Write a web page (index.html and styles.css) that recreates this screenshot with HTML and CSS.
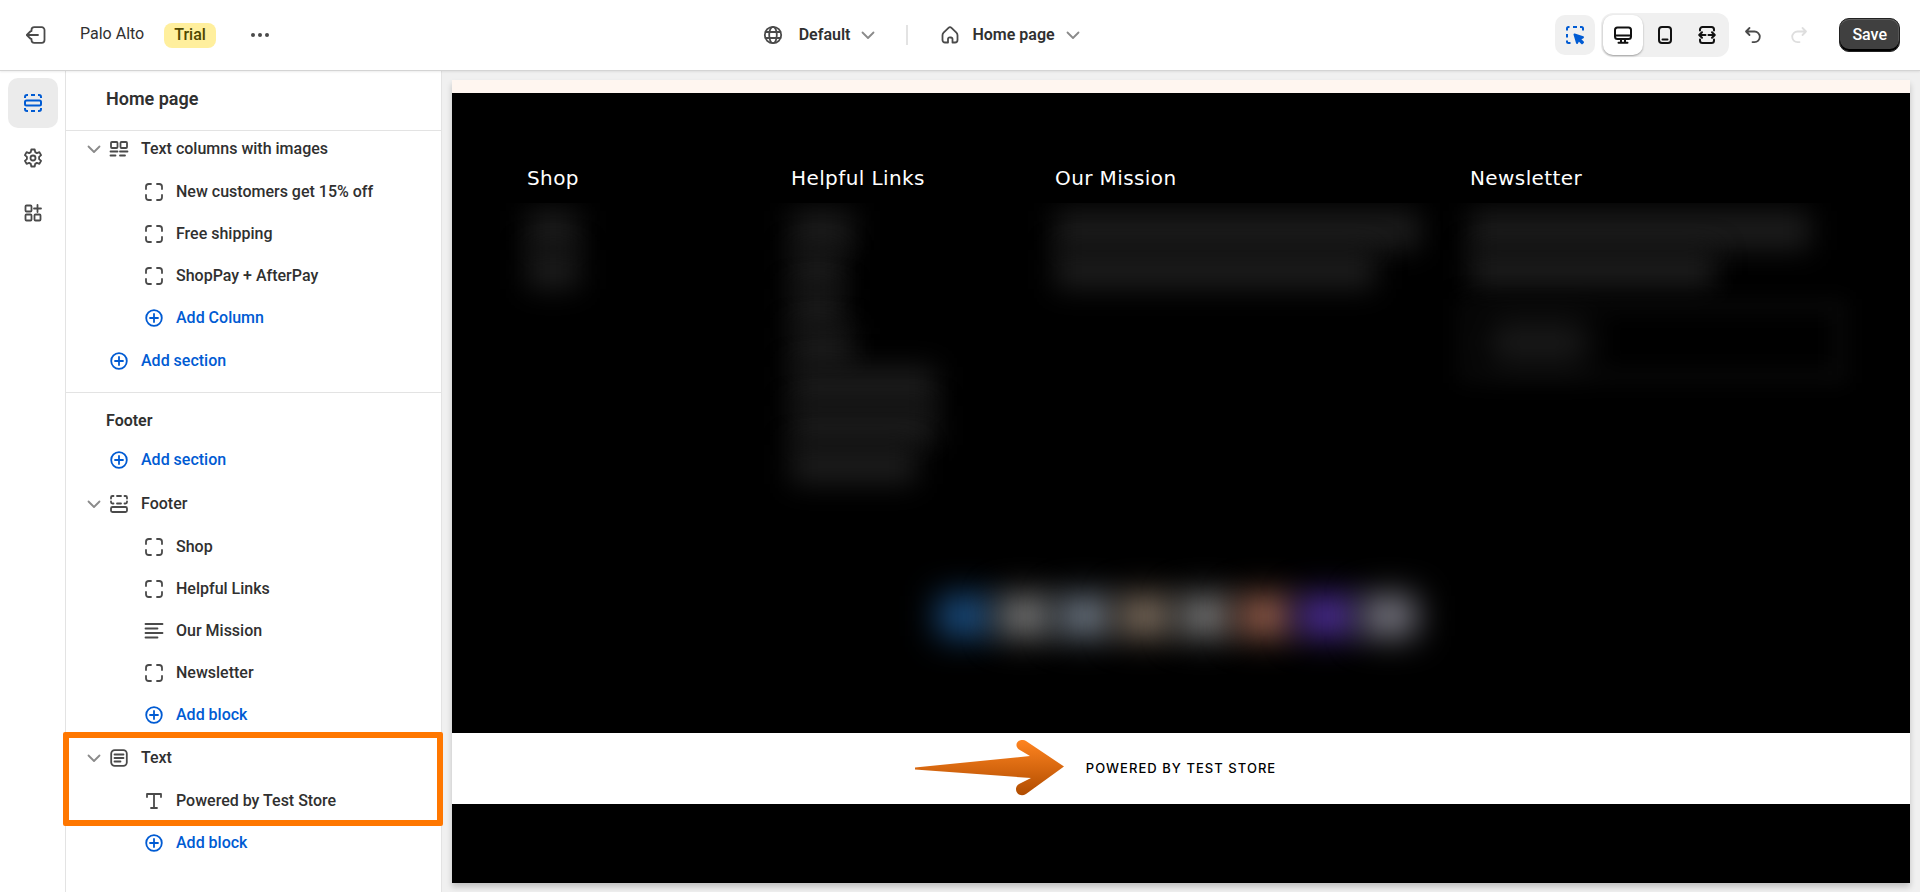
FILE: index.html
```
<!DOCTYPE html>
<html lang="en">
<head>
    <meta charset="utf-8">
    <title>Palo Alto | Theme editor</title>
    <link rel="stylesheet" href="styles.css">
</head>
<body>
    <!-- shared icons -->
    <svg class="sprite" aria-hidden="true">
        <symbol id="chevron" viewBox="0 0 20 20"><path d="M4.500 7.500 10 13l5.500-5.500"/></symbol>
        <symbol id="block" viewBox="0 0 20 20"><path d="M2 7V4.800A2.800 2.800 0 0 1 4.800 2H7M13 2h2.200A2.800 2.800 0 0 1 18 4.800V7M18 13v2.200a2.800 2.800 0 0 1-2.800 2.800H13M7 18H4.800A2.800 2.800 0 0 1 2 15.200V13"/></symbol>
        <symbol id="plus" viewBox="0 0 20 20"><circle cx="10" cy="10" r="7.800"/><path d="M10 6v8M6 10h8"/></symbol>
    </svg>

    <header class="topbar">
        <div class="topbar-left">
            <a class="exit" href="#" aria-label="Exit">
                <svg class="icon" viewBox="0 0 20 20"><path d="M5.500 6V5A2.800 2.800 0 0 1 8.300 2.200h7.400A2.800 2.800 0 0 1 18.500 5v10a2.800 2.800 0 0 1-2.800 2.800H8.300A2.800 2.800 0 0 1 5.500 15v-1M12 10H.8M4.300 6.500.8 10l3.500 3.500"/></svg>
            </a>
            <span class="theme-name">Palo Alto</span>
            <span class="badge">Trial</span>
            <button class="more" aria-label="More actions">
                <svg class="icon dots" viewBox="0 0 20 20"><circle cx="3" cy="10" r="2"/><circle cx="10" cy="10" r="2"/><circle cx="17" cy="10" r="2"/></svg>
            </button>
        </div>
        <div class="topbar-center">
            <button class="picker picker-market">
                <svg class="icon" viewBox="0 0 20 20"><circle cx="10" cy="10" r="8.200"/><ellipse cx="10" cy="10" rx="3.800" ry="8.200"/><path d="M2.500 7h15M2.500 13h15"/></svg>
                <span>Default</span>
                <svg class="icon chevron"><use href="#chevron"/></svg>
            </button>
            <span class="separator"></span>
            <button class="picker">
                <svg class="icon" viewBox="0 0 20 20"><path d="M2.500 10.200c0-1 .4-1.900 1.100-2.600l4.900-4.800a2.200 2.200 0 0 1 3 0l4.900 4.800c.7.700 1.100 1.600 1.100 2.600v4.800a2.500 2.500 0 0 1-2.500 2.500h-2.500V14a1.500 1.500 0 0 0-1.500-1.500h-1A1.500 1.500 0 0 0 8 14v3.500H5A2.500 2.500 0 0 1 2.500 15z"/></svg>
                <span>Home page</span>
                <svg class="icon chevron"><use href="#chevron"/></svg>
            </button>
        </div>
        <div class="topbar-right">
            <button class="tool inspector" aria-label="Preview inspector">
                <svg class="icon" viewBox="0 0 20 20"><path d="M2 5.500V3.500A1.500 1.500 0 0 1 3.500 2h1M8 2h4M15 2h1.500A1.500 1.500 0 0 1 18 3.500v2M2 9v3.500M2 15.500v1A1.500 1.500 0 0 0 3.500 18h2"/><path class="fill" d="m9.500 9.500 8.500 2.800-3.300 1.700 3.300 3.300-1 1-3.300-3.300-1.700 3z"/></svg>
            </button>
            <div class="devices">
                <button class="tool selected" aria-label="Desktop">
                    <svg class="icon" viewBox="0 0 20 20"><rect x="2" y="2.500" width="16" height="11.500" rx="2.500"/><path d="M2 10.500h16M8 14v3.500M12 14v3.500M5.500 17.800h9"/></svg>
                </button>
                <button class="tool" aria-label="Mobile">
                    <svg class="icon" viewBox="0 0 20 20"><rect x="4" y="2" width="12" height="16" rx="3"/><path d="M7.500 14.500h5"/></svg>
                </button>
                <button class="tool" aria-label="Fullscreen">
                    <svg class="icon" viewBox="0 0 20 20"><path d="M3 5.500v-1A2.500 2.500 0 0 1 5.500 2h9A2.500 2.500 0 0 1 17 4.500v1M3 14.500v1A2.500 2.500 0 0 0 5.500 18h9a2.500 2.500 0 0 0 2.500-2.500v-1M8.500 10H3M11.500 10H17M5 7.200 2.200 10 5 12.800M15 7.200l2.800 2.800-2.800 2.800"/></svg>
                </button>
            </div>
            <button class="tool undo" aria-label="Undo">
                <svg class="icon" viewBox="0 0 20 20"><path d="M6.500 3 3 6.500 6.500 10M3 6.500h8.500a5.300 5.300 0 0 1 0 10.600H9.500"/></svg>
            </button>
            <button class="tool redo" aria-label="Redo" disabled>
                <svg class="icon" viewBox="0 0 20 20"><path d="M13.500 3 17 6.500 13.500 10M17 6.500H8.500a5.300 5.300 0 0 0 0 10.600h2"/></svg>
            </button>
            <button class="save">Save</button>
        </div>
    </header>

    <div class="editor">
        <nav class="rail">
            <button class="rail-btn active" aria-label="Sections">
                <svg class="icon" viewBox="0 0 20 20"><rect x="2" y="7.500" width="16" height="5" rx="1.500"/><path d="M2 5V4a2 2 0 0 1 2-2h1M8 2h4M15 2h1a2 2 0 0 1 2 2v1M2 15v1a2 2 0 0 0 2 2h1M8 18h4M15 18h1a2 2 0 0 0 2-2v-1"/></svg>
            </button>
            <button class="rail-btn" aria-label="Theme settings">
                <svg class="icon" viewBox="0 0 20 20"><path d="M8.300 1.500h3.400l.5 2.600 1.700 1 2.500-.9 1.700 2.900-2 1.800v2.200l2 1.800-1.700 2.900-2.500-.9-1.700 1-.5 2.600H8.300l-.5-2.600-1.700-1-2.500.9-1.700-2.900 2-1.800V8.900l-2-1.800 1.700-2.900 2.500.9 1.700-1z"/><circle cx="10" cy="10" r="2.500"/></svg>
            </button>
            <button class="rail-btn" aria-label="App embeds">
                <svg class="icon" viewBox="0 0 20 20"><rect x="2.500" y="2.500" width="6" height="6" rx="1"/><rect x="2.500" y="11.500" width="6" height="6" rx="1"/><rect x="11.500" y="11.500" width="6" height="6" rx="1"/><path d="M14.500 2v7M11 5.500h7"/></svg>
            </button>
        </nav>

        <aside class="sidebar">
            <h2 class="sidebar-title">Home page</h2>
            <div class="tree">
                <button class="row section">
                    <svg class="icon chevron"><use href="#chevron"/></svg>
                    <svg class="icon" viewBox="0 0 20 20"><rect x="2" y="3" width="6.500" height="6" rx="1"/><rect x="11.500" y="3" width="6.500" height="6" rx="1"/><path d="M1.500 12.500h7M11 12.500h7.500M1.500 16.500h5M11 16.500h5"/></svg>
                    <span>Text columns with images</span>
                </button>
                <button class="row child"><svg class="icon"><use href="#block"/></svg><span>New customers get 15% off</span></button>
                <button class="row child"><svg class="icon"><use href="#block"/></svg><span>Free shipping</span></button>
                <button class="row child"><svg class="icon"><use href="#block"/></svg><span>ShopPay + AfterPay</span></button>
                <button class="row child add"><svg class="icon"><use href="#plus"/></svg><span>Add Column</span></button>
                <button class="row section leaf add"><svg class="icon"><use href="#plus"/></svg><span>Add section</span></button>
            </div>

            <h3 class="group-title">Footer</h3>
            <div class="group">
                <button class="row section leaf add"><svg class="icon"><use href="#plus"/></svg><span>Add section</span></button>
                <button class="row section">
                    <svg class="icon chevron"><use href="#chevron"/></svg>
                    <svg class="icon" viewBox="0 0 20 20"><rect x="2" y="13" width="16" height="5" rx="1.500"/><path d="M2 4.500V3.500A1.500 1.500 0 0 1 3.500 2h1M8 2h4M15.500 2h1A1.500 1.500 0 0 1 18 3.500v1M2 7.500v.5A1.500 1.500 0 0 0 3.500 9.500h1M8 9.500h4M15.500 9.500h1A1.500 1.500 0 0 0 18 8v-.5"/></svg>
                    <span>Footer</span>
                </button>
                <button class="row child"><svg class="icon"><use href="#block"/></svg><span>Shop</span></button>
                <button class="row child"><svg class="icon"><use href="#block"/></svg><span>Helpful Links</span></button>
                <button class="row child">
                    <svg class="icon" viewBox="0 0 20 20"><path d="M1.500 3h17M1.500 7.500h12M1.500 12h17M1.500 16.500h12"/></svg>
                    <span>Our Mission</span>
                </button>
                <button class="row child"><svg class="icon"><use href="#block"/></svg><span>Newsletter</span></button>
                <button class="row child add"><svg class="icon"><use href="#plus"/></svg><span>Add block</span></button>
                <div class="highlight">
                    <button class="row section">
                        <svg class="icon chevron"><use href="#chevron"/></svg>
                        <svg class="icon" viewBox="0 0 20 20"><rect x="2.200" y="2.200" width="15.600" height="15.600" rx="3.500"/><path d="M5.500 6.500h9M5.500 10h9M5.500 13.500h6"/></svg>
                        <span>Text</span>
                    </button>
                    <button class="row child">
                        <svg class="icon" viewBox="0 0 20 20"><path d="M3 6V3h14v3M10 3v14M7 17h6"/></svg>
                        <span>Powered by Test Store</span>
                    </button>
                </div>
                <button class="row child add"><svg class="icon"><use href="#plus"/></svg><span>Add block</span></button>
            </div>
        </aside>

        <main class="stage">
            <div class="preview">
                <div class="band"></div>
                <footer class="store-footer">
                    <div class="columns">
                        <section class="column">
                            <h4>Shop</h4>
                            <div class="blurred">
                                <i class="bar w50"></i><i class="bar w50"></i>
                            </div>
                        </section>
                        <section class="column">
                            <h4>Helpful Links</h4>
                            <div class="blurred">
                                <i class="bar w60"></i><i class="bar w50"></i><i class="bar w50"></i><i class="bar w60"></i>
                                <i class="bar w140"></i><i class="bar w140"></i><i class="bar w120"></i>
                            </div>
                        </section>
                        <section class="column">
                            <h4>Our Mission</h4>
                            <div class="blurred">
                                <i class="bar w360"></i><i class="bar w320"></i>
                            </div>
                        </section>
                        <section class="column">
                            <h4>Newsletter</h4>
                            <div class="blurred">
                                <i class="bar w340"></i><i class="bar w240"></i>
                                <div class="email"><i class="bar w100"></i></div>
                            </div>
                        </section>
                    </div>
                    <div class="payments">
                        <i class="pay blue"></i>
                        <i class="pay gray"></i>
                        <i class="pay steel"></i>
                        <i class="pay tan"></i>
                        <i class="pay gray"></i>
                        <i class="pay rust"></i>
                        <i class="pay purple"></i>
                        <i class="pay silver"></i>
                    </div>
                </footer>
                <div class="powered">
                    <p>
                        <svg class="arrow" viewBox="0 0 150 58" aria-hidden="true">
                            <defs>
                                <linearGradient id="orange" x1="0" y1="0" x2="0" y2="1">
                                    <stop offset="0" stop-color="#ff8420"/>
                                    <stop offset="1" stop-color="#b04c00"/>
                                </linearGradient>
                            </defs>
                            <path fill="url(#orange)" d="M1 29.500 116 18l-11-6.500c-5-4-2-10 4-9.500 1 0 2 .5 3 1L150 28.500 112 56c-5 3-10 0-10-5 0-2 1-4 3-5l12-6L1 31.500z"/>
                        </svg>
                        Powered by Test Store
                    </p>
                </div>
                <div class="end"></div>
            </div>
        </main>
    </div>
</body>
</html>
```

FILE: styles.css
```
*, *::before, *::after { box-sizing: border-box; margin: 0; padding: 0; }
body { display: flex; flex-direction: column; min-height: 100vh; background: #fff; color: #303030; font-family: Roboto, "Liberation Sans", sans-serif; font-size: 16px; line-height: 20px; }
button { border: 0; background: none; color: inherit; font: inherit; cursor: pointer; }
a { color: inherit; }

.sprite { position: absolute; width: 0; height: 0; }
.icon { display: block; flex: none; width: 20px; height: 20px; fill: none; stroke: #4a4a4a; stroke-width: 1.8; stroke-linecap: round; stroke-linejoin: round; }
.chevron { stroke: #8a8a8a; }
.dots { fill: #4a4a4a; stroke: none; }
.fill { fill: #005bd3; }

/* top bar */
.topbar { position: relative; z-index: 1; display: flex; align-items: center; justify-content: space-between; height: 71px; padding: 0 20px 0 26px; background: #fff; border-bottom: 1px solid #d4d4d4; box-shadow: 0 1px 2px rgba(0, 0, 0, .08); }
.topbar-left, .topbar-center, .topbar-right, .picker { display: flex; align-items: center; }
.theme-name { margin: 0 20px 2px 34px; }
.badge { padding: 2px 10px 3px; border-radius: 8px; background: #ffef9d; color: #4f4700; font-weight: 500; }
.more { padding: 10px 20px; margin-left: 14px; }
.picker { font-weight: 600; }
.picker .icon:first-child { margin-right: 12px; }
.picker-market .icon:first-child { margin-right: 16px; }
.picker .chevron { margin-left: 8px; }
.separator { width: 2px; height: 20px; margin: 0 32px 0 28px; background: #e3e3e3; }

.tool { display: flex; align-items: center; justify-content: center; width: 40px; height: 40px; border-radius: 10px; }
.inspector { margin-right: 6px; background: #f0f0f0; }
.inspector .icon { stroke: #005bd3; stroke-width: 2; stroke-linecap: butt; }
.devices { display: flex; gap: 2px; padding: 2px; margin-right: 4px; border-radius: 12px; background: #f0f0f0; }
.devices .icon { stroke: #111; stroke-width: 2; }
.selected { background: #fff; box-shadow: 0 1px 2px rgba(0, 0, 0, .35); }
.redo { margin: 0 20px 0 6px; }
.redo .icon { stroke: #dedede; }
.save { height: 34px; padding: 0 12px; border: 1px solid #222; border-radius: 10px; background: #404040; box-shadow: inset 0 -2px 0 #000, inset 0 1px 0 #606060, inset -1px 0 0 #555; color: #fff; font-weight: 500; }

/* editor */
.editor { display: flex; flex: 1; }
.rail { display: flex; flex-direction: column; gap: 5px; flex: none; width: 66px; padding: 7px 8px; border-right: 1px solid #e3e3e3; }
.rail-btn { display: flex; align-items: center; justify-content: center; width: 50px; height: 50px; border-radius: 10px; }
.active { background: #ebebeb; }
.active .icon { stroke: #005bd3; stroke-width: 2; stroke-linecap: butt; }

.sidebar { flex: none; width: 376px; border-right: 1px solid #e3e3e3; }
.sidebar-title { height: 60px; padding: 18px 40px; border-bottom: 1px solid #e3e3e3; font-size: 18px; font-weight: 600; }
.tree { margin-top: -4px; padding-bottom: 9px; border-bottom: 1px solid #e3e3e3; }
.group-title { padding: 12px 40px 1px; font-size: 16px; font-weight: 600; line-height: 32px; }
.row { display: flex; align-items: center; gap: 12px; width: 100%; height: 42px; padding-left: 78px; font-weight: 500; text-align: left; }
.section { height: 44px; padding-left: 18px; }
.section .chevron { margin-right: -7px; }
.leaf { padding-left: 43px; }
.add { color: #005bd3; }
.add .icon { stroke: #005bd3; }
.highlight { position: relative; }
.highlight::after { content: ""; position: absolute; top: -4px; right: -2px; bottom: -4px; left: -3px; border: 6px solid #ff7700; border-radius: 2px; pointer-events: none; }

/* store preview */
.stage { flex: 1; min-width: 0; padding: 9px 10px; background: #f0f0f0; }
.preview { box-shadow: 0 4px 6px rgba(0, 0, 0, .2); }
.band { height: 13px; background: #fff6f0; }
.store-footer { height: 640px; padding: 72px 75px 0; background: #000; color: #fff; }
.columns { display: grid; grid-template-columns: 264fr 264fr 415fr 365fr; height: 416px; }
.column h4 { height: 38px; font-family: "DejaVu Sans", sans-serif; font-size: 20px; font-weight: 400; line-height: 26px; letter-spacing: .02em; }
.blurred { height: 340px; padding: 8px 30px 0; margin: 0 -30px; overflow: hidden; }
.bar { display: block; height: 39px; background: #1c1c1c; filter: blur(14px); }
.w50 { width: 52px; }
.w60 { width: 62px; }
.w100 { width: 100px; }
.w120 { width: 125px; }
.w140 { width: 145px; }
.w240 { width: 245px; }
.w320 { width: 320px; }
.w340 { width: 340px; }
.w360 { width: 365px; }
.email { height: 84px; padding: 10px 16px; margin: 10px -12px 0; border: 14px solid #090909; filter: blur(10px); }
.payments { display: flex; justify-content: center; gap: 6px; margin: 15px 8px 0 0; }
.pay { width: 54px; height: 40px; filter: blur(17px); }
.blue { background: #1c5288; }
.gray { background: #7e7e7e; }
.steel { background: #747f8c; }
.tan { background: #857464; }
.rust { background: #9c6350; }
.purple { width: 58px; background: #50309c; }
.silver { background: #7f7e8a; }

.powered { display: flex; align-items: center; justify-content: center; height: 71px; padding-bottom: 2px; background: #fff; color: #000; }
.powered p { position: relative; font-family: Inter, sans-serif; font-size: 13px; font-weight: 500; letter-spacing: .08em; text-transform: uppercase; }
.arrow { position: absolute; top: -20px; right: 100%; width: 150px; height: 58px; margin-right: 22px; }
.end { height: 79px; background: #000; }
```
